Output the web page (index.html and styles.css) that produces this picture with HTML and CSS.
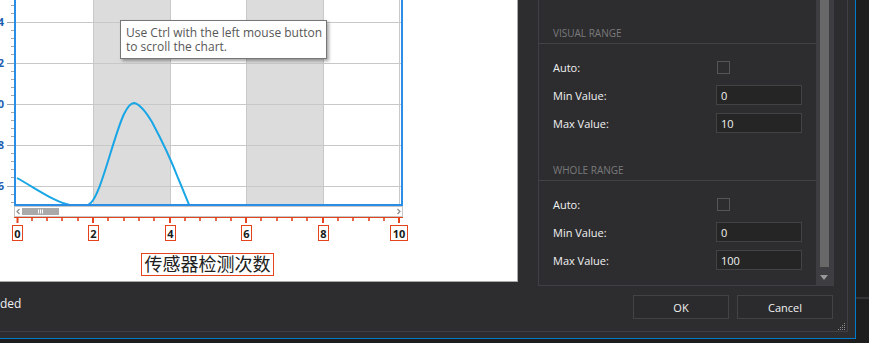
FILE: index.html
```html
<!DOCTYPE html>
<html>
  <head>
    <meta charset="UTF-8">
    <title>Axis Range</title>
    <link rel="stylesheet" href="styles.css">
  </head>
  <body>
    <div class="desk">
      <div class="window">
        <div class="window-inner">
          <div class="main">
            <div class="chart">
              <svg class="plot" width="517" height="281" viewBox="0 0 517 281">
                <defs>
                  <clipPath id="plotclip"><rect x="16" y="0" width="385" height="204"/></clipPath>
                </defs>
                <rect x="93" y="0" width="77" height="205" fill="#dcdcdc"/>
                <rect x="246" y="0" width="77" height="205" fill="#dcdcdc"/>
                <path d="M15,22.5H402 M15,63.5H402 M15,104.5H402 M15,145.5H402 M15,186.5H402" stroke="#c8c8c8" stroke-width="1"/>
                <path d="M93.5,0V205 M170.5,0V205 M246.5,0V205 M323.5,0V205 M399.5,0V205" stroke="#c8c8c8" stroke-width="1"/>
                <path clip-path="url(#plotclip)" d="M17,178 C40,191 55,202 70,205 L88,205 C100,201 112,140 124,114 C128,106 131,103 134,103 C140,104 146,112 152,122 C160,137 170,157 178,178 L190,207" fill="none" stroke="#18a6e6" stroke-width="2"/>
                <path d="M15,0V206 M402,0V206 M14,205H403" stroke="#2a8de6" stroke-width="2"/>
                <path d="M11,5.5H14 M11,13.5H14 M11,30.5H14 M11,38.5H14 M11,46.5H14 M11,54.5H14 M11,71.5H14 M11,79.5H14 M11,87.5H14 M11,95.5H14 M11,112.5H14 M11,120.5H14 M11,128.5H14 M11,136.5H14 M11,153.5H14 M11,161.5H14 M11,169.5H14 M11,177.5H14 M11,194.5H14 M11,202.5H14" stroke="#a8a8a8" stroke-width="1"/>
                <path d="M7,22.5H14 M7,63.5H14 M7,104.5H14 M7,145.5H14 M7,186.5H14" stroke="#9aa6b4" stroke-width="1"/>
                <g class="ylabel">
                  <text x="4" y="26">1.4</text>
                  <text x="4" y="67">1.2</text>
                  <text x="4" y="108">1.0</text>
                  <text x="4" y="149">0.8</text>
                  <text x="4" y="190">0.6</text>
                </g>
                <rect x="14.5" y="206.5" width="388" height="10" fill="#ffffff" stroke="#c6c6c6"/>
                <rect x="22" y="208" width="37" height="7" fill="#a9a9a9"/>
                <path d="M38.5,209.5V213.5 M40.5,209.5V213.5 M42.5,209.5V213.5" stroke="#ffffff" stroke-width="1"/>
                <polyline points="19.5,209 17,211.5 19.5,214" fill="none" stroke="#8a8a8a" stroke-width="1.2"/>
                <polyline points="397.5,209 400,211.5 397.5,214" fill="none" stroke="#8a8a8a" stroke-width="1.2"/>
                <path d="M14,217.5H403" stroke="#e4431c" stroke-width="1"/>
                <path d="M32,217V221 M47,217V221 M62,217V221 M78,217V221 M108,217V221 M124,217V221 M139,217V221 M154,217V221 M185,217V221 M200,217V221 M216,217V221 M231,217V221 M261,217V221 M277,217V221 M292,217V221 M307,217V221 M338,217V221 M353,217V221 M369,217V221 M384,217V221" stroke="#e4431c" stroke-width="1.6"/>
                <path d="M17.5,217V223 M93,217V223 M170,217V223 M246,217V223 M323,217V223 M399,217V223" stroke="#e4431c" stroke-width="2"/>
                <g class="xbox">
                  <rect x="12.5" y="225.5" width="10" height="15"/>
                  <rect x="88.5" y="225.5" width="10" height="15"/>
                  <rect x="165.5" y="225.5" width="10" height="15"/>
                  <rect x="241.5" y="225.5" width="10" height="15"/>
                  <rect x="318.5" y="225.5" width="10" height="15"/>
                  <rect x="390.5" y="225.5" width="17" height="15"/>
                  <rect x="141.5" y="253.5" width="132" height="22"/>
                </g>
                <g class="xlabel">
                  <text x="17.5" y="237.5">0</text>
                  <text x="93.5" y="237.5">2</text>
                  <text x="170.5" y="237.5">4</text>
                  <text x="246.5" y="237.5">6</text>
                  <text x="323.5" y="237.5">8</text>
                  <text x="399" y="237.5">10</text>
                </g>
                <text class="axis-title" x="207.5" y="270.5">传感器检测次数</text>
              </svg>
              <div class="tooltip">Use Ctrl with the left mouse button<br>to scroll the chart.</div>
            </div>
            <div class="panel">
              <div class="panel-content">
                <div class="group">
                  <div class="group-header">VISUAL RANGE</div>
                  <div class="group-body">
                    <div class="row"><span class="label">Auto:</span><span class="checkbox"></span></div>
                    <div class="row"><span class="label">Min Value:</span><input class="field" type="text" value="0"></div>
                    <div class="row"><span class="label">Max Value:</span><input class="field" type="text" value="10"></div>
                  </div>
                </div>
                <div class="group">
                  <div class="group-header">WHOLE RANGE</div>
                  <div class="group-body">
                    <div class="row"><span class="label">Auto:</span><span class="checkbox"></span></div>
                    <div class="row"><span class="label">Min Value:</span><input class="field" type="text" value="0"></div>
                    <div class="row"><span class="label">Max Value:</span><input class="field" type="text" value="100"></div>
                  </div>
                </div>
              </div>
              <div class="vscroll">
                <div class="vscroll-thumb"></div>
                <div class="vscroll-arrow"></div>
              </div>
            </div>
          </div>
          <div class="footer">
            <span class="status">ded</span>
            <div class="buttons">
              <button class="btn" type="button">OK</button>
              <button class="btn" type="button">Cancel</button>
            </div>
          </div>
          <svg class="grip" width="8" height="8" viewBox="0 0 8 8">
            <path d="M6,0h1v1h-1z M4,2h1v1h-1z M6,2h1v1h-1z M2,4h1v1h-1z M4,4h1v1h-1z M6,4h1v1h-1z M0,6h1v1h-1z M2,6h1v1h-1z M4,6h1v1h-1z M6,6h1v1h-1z" fill="#8c8c8c"/>
          </svg>
        </div>
      </div>
      <div class="outside">
        <div class="outside-line"></div>
      </div>
    </div>
  </body>
</html>
```

FILE: styles.css
```css
body {
  margin: 0;
  background-color: #1e1e1e;
  overflow: hidden;
  font-family: "Open Sans", "Noto Sans", sans-serif;
  font-size: 11px;
  color: #f1f1f1;
}
.desk {
  display: flex;
  width: 869px;
  height: 343px;
}
.window {
  width: 855px;
  height: 338px;
  background-color: #2d2d30;
  border-right: 1px solid #007acc;
  border-bottom: 1px solid #007acc;
}
.window-inner {
  position: relative;
  width: 847px;
  height: 331px;
  border-right: 1px solid #3f3f46;
  border-bottom: 1px solid #3f3f46;
  display: flex;
  flex-direction: column;
}
.main {
  display: flex;
  height: 286px;
}

/* chart */
.chart {
  position: relative;
  width: 517px;
  height: 281px;
  background-color: #ffffff;
  border-right: 1px solid #a9a9a9;
  border-bottom: 1px solid #a9a9a9;
}
.plot {
  display: block;
}
.ylabel text {
  font-family: "Open Sans", sans-serif;
  font-size: 11px;
  font-weight: bold;
  fill: #1c5db0;
  text-anchor: end;
}
.xbox rect {
  fill: none;
  stroke: #e4431c;
  stroke-width: 1;
}
.xlabel text {
  font-family: "Open Sans", sans-serif;
  font-size: 11px;
  font-weight: bold;
  fill: #1a1a1a;
  text-anchor: middle;
}
.axis-title {
  font-family: "Noto Sans CJK SC", sans-serif;
  font-size: 18px;
  fill: #202020;
  text-anchor: middle;
}
.tooltip {
  position: absolute;
  left: 120px;
  top: 20px;
  width: 200px;
  height: 37px;
  padding: 0 0 0 5px;
  box-sizing: content-box;
  background-color: #ffffff;
  border: 1px solid #767676;
  box-shadow: 2px 2px 3px rgba(0, 0, 0, 0.35);
  color: #575757;
  font-size: 12px;
  line-height: 14px;
  padding-top: 5px;
  height: 32px;
  white-space: nowrap;
}

/* right panel */
.panel {
  display: flex;
  margin-left: 20px;
  height: 285px;
  border-left: 1px solid #3f3f46;
  border-bottom: 1px solid #3f3f46;
}
.panel-content {
  width: 277px;
  padding-top: 14px;
  overflow: hidden;
}
.group-header {
  display: flex;
  align-items: flex-end;
  height: 25px;
  padding: 0 0 4px 14px;
  border-bottom: 1px solid #434346;
  font-size: 10px;
  line-height: 12px;
  color: #7a7a7a;
}
.group-body {
  display: flex;
  flex-direction: column;
  gap: 8px;
  padding: 13px 14px 18px 14px;
}
.row {
  display: flex;
  align-items: center;
  height: 20px;
}
.label {
  width: 163px;
}
.checkbox {
  width: 11px;
  height: 11px;
  margin-left: 1px;
  border: 1px solid #555558;
  background-color: #2d2d30;
}
.field {
  box-sizing: border-box;
  width: 86px;
  height: 20px;
  padding: 0 4px;
  border: 1px solid #434346;
  background-color: #252526;
  color: #f1f1f1;
  font-family: inherit;
  font-size: 11px;
  outline: none;
}
.vscroll {
  width: 18px;
  background-color: #3e3e42;
  display: flex;
  flex-direction: column;
  align-items: flex-start;
  padding-left: 4px;
  box-sizing: border-box;
}
.vscroll-thumb {
  width: 9px;
  height: 267px;
  background-color: #686868;
}
.vscroll-arrow {
  margin-top: 8px;
  width: 0;
  height: 0;
  border-left: 4.5px solid transparent;
  border-right: 4.5px solid transparent;
  border-top: 5px solid #999999;
}

/* footer */
.footer {
  display: flex;
  justify-content: space-between;
  align-items: flex-start;
  padding: 9px 14px 0 0;
}
.status {
  margin-top: 1px;
  font-size: 12px;
  line-height: 16px;
}
.buttons {
  display: flex;
  gap: 8px;
}
.btn {
  width: 96px;
  height: 24px;
  background-color: #2b2b2e;
  border: 1px solid #434346;
  color: #f1f1f1;
  font-family: inherit;
  font-size: 11px;
  padding: 0;
}
.grip {
  position: absolute;
  right: 1px;
  bottom: 0;
}

.outside {
  flex: 1;
  padding-top: 297px;
}
.outside-line {
  height: 2px;
  background-color: #333337;
}
```
